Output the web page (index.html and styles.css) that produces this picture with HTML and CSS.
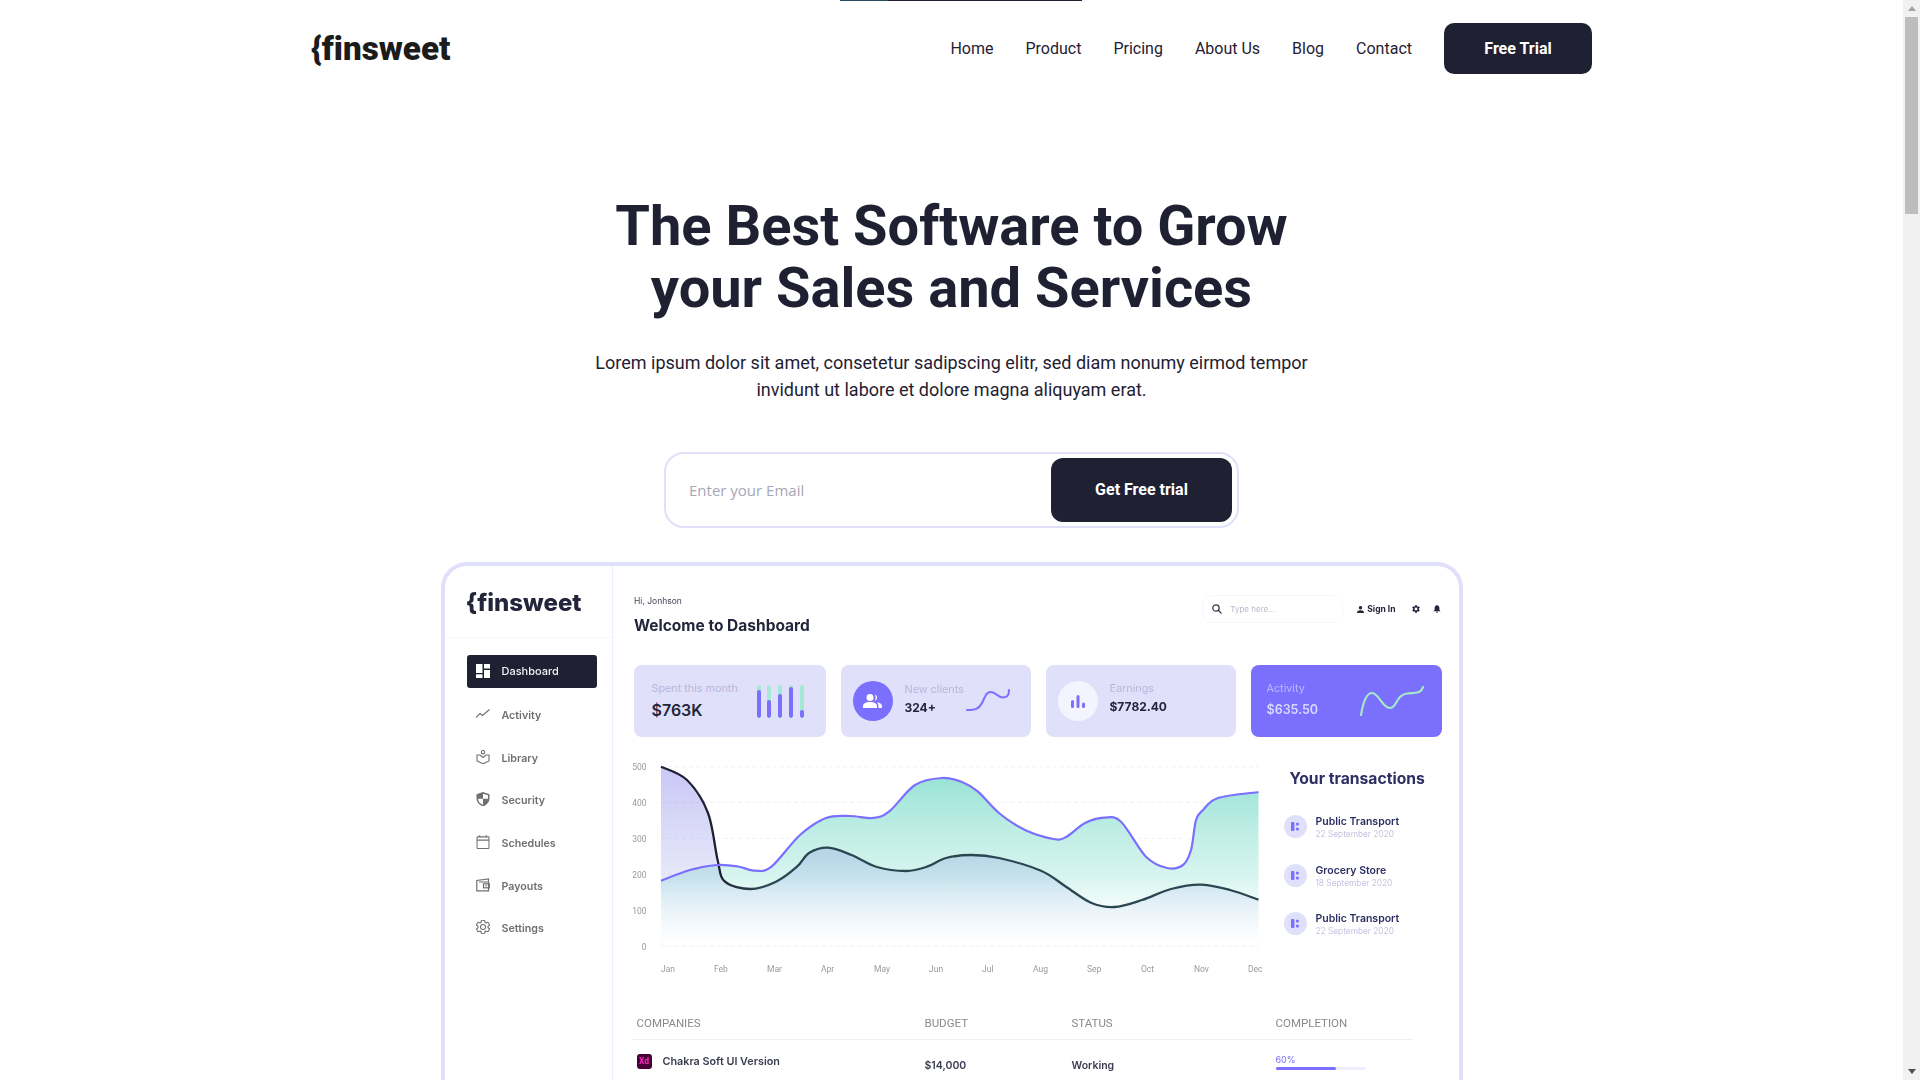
FILE: index.html
```html
<!DOCTYPE html>
<html lang="en">
<head>
<meta charset="utf-8">
<title>Finsweet</title>
<link rel="stylesheet" href="styles.css">
</head>
<body>
<div class="page">
  <main class="main">
    <div class="topline"><span class="topline-tint"></span></div>
    <header class="nav">
      <div class="logo">{finsweet</div>
      <nav class="nav-links">
        <a>Home</a><a>Product</a><a>Pricing</a><a>About Us</a><a>Blog</a><a>Contact</a>
        <button class="btn-trial">Free Trial</button>
      </nav>
    </header>
    <section class="hero">
      <h1>The Best Software to Grow<br>your Sales and Services</h1>
      <p>Lorem ipsum dolor sit amet, consetetur sadipscing elitr, sed diam nonumy eirmod tempor<br>invidunt ut labore et dolore magna aliquyam erat.</p>
      <form class="signup">
        <input class="signup-input" type="text" placeholder="Enter your Email">
        <button class="signup-btn" type="button">Get Free trial</button>
      </form>
    </section>
    <section class="frame">
      <div class="shot">
        <aside class="side">
          <div class="side-logo">{finsweet</div>
          <ul class="menu">
            <li class="menu-item active">
              <svg class="mi" viewBox="0 0 14 14"><path fill="#fff" d="M0 0h6.500v9H0zM8 0h6v4.500H8zM0 10.200h6.500V14H0zM8 6h6v8H8z"/></svg>Dashboard</li>
            <li class="menu-item">
              <svg class="mi" viewBox="0 0 14 14"><path fill="none" stroke="#6f6f74" stroke-width="1.100" d="M0 10.500 4 6.500l2.500 2L13.500 2.500"/></svg>Activity</li>
            <li class="menu-item">
              <svg class="mi" viewBox="0 0 14 14"><g fill="none" stroke="#6f6f74" stroke-width="1.100"><circle cx="7" cy="2.200" r="1.700"/><path d="M4 5H1v6l6 2.800L13 11V5h-3L7 7.500z"/></g></svg>Library</li>
            <li class="menu-item">
              <svg class="mi" viewBox="0 0 14 14"><path fill="#6f6f74" d="M7 0l6.500 2.200v4.300C13.500 10 11 13 7 14.500 3 13 .5 10 .5 6.500V2.200zM7 1.800v5H2c.1 2.700 2 5 5 6.100V6.800h5V3.300z"/></svg>Security</li>
            <li class="menu-item">
              <svg class="mi" viewBox="0 0 14 15"><g fill="none" stroke="#6f6f74" stroke-width="1.100"><rect x=".6" y="2" width="12.800" height="12.400" rx=".8"/><path d="M.6 5.500h12.800M3.500 0v2M10.500 0v2"/></g></svg>Schedules</li>
            <li class="menu-item">
              <svg class="mi" viewBox="0 0 14 14"><g fill="none" stroke="#6f6f74" stroke-width="1.200"><path d="M12.500 4V12.800H.8V2.500L12.500 1v3H3"/><rect x="7.500" y="5.800" width="5.800" height="4"/></g><circle cx="10" cy="7.800" r=".8" fill="#6f6f74"/></svg>Payouts</li>
            <li class="menu-item">
              <svg class="mi" viewBox="2 2 20 20"><path fill="none" stroke="#6f6f74" stroke-width="1.500" d="M19.140 12.940c.04-.3.06-.61.06-.94 0-.32-.02-.64-.07-.94l2.030-1.580a.49.49 0 0 0 .12-.61l-1.920-3.320a.488.488 0 0 0-.59-.22l-2.390.96c-.5-.38-1.030-.7-1.620-.94l-.36-2.540a.484.484 0 0 0-.48-.41h-3.840c-.24 0-.43.17-.47.41l-.36 2.540c-.59.24-1.130.57-1.620.94l-2.390-.96c-.22-.08-.47 0-.59.22L2.740 8.870c-.12.21-.08.47.12.61l2.030 1.580c-.05.3-.09.63-.09.94s.02.64.07.94l-2.030 1.580a.49.49 0 0 0-.12.61l1.920 3.320c.12.22.37.29.59.22l2.390-.96c.5.38 1.030.7 1.620.94l.36 2.540c.05.24.24.41.48.41h3.840c.24 0 .44-.17.47-.41l.36-2.540c.59-.24 1.130-.56 1.620-.94l2.390.96c.22.08.47 0 .59-.22l1.920-3.320c.12-.22.07-.47-.12-.61l-2.010-1.580zM12 15.600c-1.980 0-3.600-1.620-3.600-3.600s1.620-3.600 3.600-3.600 3.600 1.620 3.600 3.600-1.620 3.600-3.600 3.600z"/></svg>Settings</li>
          </ul>
        </aside>
        <div class="content">
          <div class="top">
            <div>
              <div class="hi">Hi, Jonhson</div>
              <div class="welcome">Welcome to Dashboard</div>
            </div>
            <div class="tools">
              <div class="search">
                <svg class="search-ic" viewBox="0 0 10 10"><g fill="none" stroke="#3b3d4c" stroke-width="1.300"><circle cx="4" cy="4" r="3.200"/><path d="M6.400 6.400 9.500 9.500"/></g></svg>
                <span>Type here...</span>
              </div>
              <div class="signin">
                <svg class="signin-ic" viewBox="0 0 8 8"><circle cx="4" cy="2" r="2" fill="#23253a"/><path fill="#23253a" d="M0 8c0-2.400 1.500-3.200 4-3.200S8 5.600 8 8z"/></svg>Sign In
              </div>
              <svg class="tool-ic" viewBox="2 2 20 20"><path fill="#23253a" fill-rule="evenodd" d="M19.140 12.940c.04-.3.06-.61.06-.94 0-.32-.02-.64-.07-.94l2.030-1.580a.49.49 0 0 0 .12-.61l-1.920-3.320a.488.488 0 0 0-.59-.22l-2.390.96c-.5-.38-1.030-.7-1.620-.94l-.36-2.540a.484.484 0 0 0-.48-.41h-3.840c-.24 0-.43.17-.47.41l-.36 2.540c-.59.24-1.130.57-1.620.94l-2.390-.96c-.22-.08-.47 0-.59.22L2.740 8.870c-.12.21-.08.47.12.61l2.030 1.580c-.05.3-.09.63-.09.94s.02.64.07.94l-2.030 1.580a.49.49 0 0 0-.12.61l1.920 3.320c.12.22.37.29.59.22l2.390-.96c.5.38 1.030.7 1.620.94l.36 2.540c.05.24.24.41.48.41h3.840c.24 0 .44-.17.47-.41l.36-2.540c.59-.24 1.130-.56 1.620-.94l2.390.96c.22.08.47 0 .59-.22l1.920-3.320c.12-.22.07-.47-.12-.61l-2.010-1.580zM12 15.600c-1.980 0-3.600-1.620-3.600-3.600s1.620-3.600 3.600-3.600 3.600 1.620 3.600 3.600-1.620 3.600-3.600 3.600z"/></svg>
              <svg class="tool-ic bell" viewBox="0 0 8 9"><path fill="#23253a" d="M4 0c.4 0 .7.3.7.7C6 1 6.700 2.100 6.700 3.500v2L8 7H0l1.300-1.500v-2C1.300 2.100 2 1 3.300.7 3.300.3 3.600 0 4 0zM3 7.700h2C5 8.500 4.500 9 4 9s-1-.5-1-1.300z"/></svg>
            </div>
          </div>
          <div class="cards">
            <div class="card">
              <div class="card-text">
                <div class="card-label">Spent this month</div>
                <div class="card-value big">$763K</div>
              </div>
              <div class="bars">
                <i class="bar"><b style="height:82%"></b></i>
                <i class="bar"><b style="height:52%"></b></i>
                <i class="bar"><b style="height:70%"></b></i>
                <i class="bar"><b style="height:91%"></b></i>
                <i class="bar"><b style="height:22%"></b></i>
              </div>
            </div>
            <div class="card card-icon">
              <div class="circle circle-purple">
                <svg class="circle-ic" viewBox="0 0 19 14"><path fill="#fff" d="M7 0a3.500 3.500 0 1 1 0 7 3.500 3.500 0 0 1 0-7zM0 14v-2c0-2.500 3-4 7-4s7 1.500 7 4v2zM11.500 .2a3.400 3.400 0 0 1 0 6.600c.8-.9 1.200-2 1.200-3.300s-.4-2.400-1.200-3.300zM14 8.200c2.800.4 5 1.700 5 3.800v2h-3.500v-2c0-1.600-.6-2.800-1.500-3.800z"/></svg>
              </div>
              <div class="card-text">
                <div class="card-label">New clients</div>
                <div class="card-value">324+</div>
              </div>
              <svg class="spark-a" viewBox="0 0 44 22"><path fill="none" stroke="#7b6ffe" stroke-width="2" stroke-linecap="round" d="M1 21C8 21 13 21 17 12 20 5 21 3 25 3 30 3 32 9 37 8.500 41 8 43 7 43 1"/></svg>
            </div>
            <div class="card card-icon">
              <div class="circle circle-pale">
                <svg class="circle-ic small" viewBox="0 0 14 13"><g fill="#7b6ffe"><rect x="0" y="5" width="3" height="8" rx="1.500"/><rect x="5.500" y="0" width="3" height="13" rx="1.500"/><rect x="11" y="7.500" width="3" height="5.500" rx="1.500"/></g></svg>
              </div>
              <div class="card-text lifted">
                <div class="card-label">Earnings</div>
                <div class="card-value">$7782.40</div>
              </div>
            </div>
            <div class="card card-dark">
              <div class="card-text">
                <div class="card-label">Activity</div>
                <div class="card-value big-light">$635.50</div>
              </div>
              <svg class="spark-b" viewBox="0 0 64 30"><path fill="none" stroke="#a5e9c9" stroke-width="2.200" stroke-linecap="round" d="M1 29C3 17 6 7 12 7 19 7 22 22 30 22 37 22 36 9 47 7.500 56 6.500 61 8 63 1"/></svg>
            </div>
          </div>
          <div class="middle">
            <svg class="chart" viewBox="620 750 660 240">
              <defs>
                <linearGradient id="tealFill" gradientUnits="userSpaceOnUse" x1="0" y1="778" x2="0" y2="945">
                  <stop offset="0" stop-color="#9ae3d6"/>
                  <stop offset=".3" stop-color="#bdede4"/>
                  <stop offset=".6" stop-color="#d8f5f0"/>
                  <stop offset="1" stop-color="#ffffff" stop-opacity="0"/>
                </linearGradient>
                <linearGradient id="lavFill" gradientUnits="userSpaceOnUse" x1="0" y1="767" x2="0" y2="945">
                  <stop offset="0" stop-color="#6c63e8" stop-opacity=".36"/>
                  <stop offset=".55" stop-color="#5f66d8" stop-opacity=".17"/>
                  <stop offset="1" stop-color="#6c9fe8" stop-opacity="0"/>
                </linearGradient>
                <linearGradient id="darkLine" gradientUnits="userSpaceOnUse" x1="661" y1="0" x2="1258" y2="0">
                  <stop offset="0" stop-color="#1f2133"/>
                  <stop offset=".1" stop-color="#1f2133"/>
                  <stop offset=".16" stop-color="#2a4650"/>
                  <stop offset="1" stop-color="#2a4650"/>
                </linearGradient>
              </defs>
              <g class="grid">
                <path d="M661 766.700H1258M661 802.500H1258M661 838.300H1258M661 874.100H1258M661 946H1258"/>
              </g>
              <path id="areaPurple" fill="url(#tealFill)"/>
              <path id="areaDark" fill="url(#lavFill)"/>
              <path id="lineDark" fill="none" stroke="url(#darkLine)" stroke-width="2.300"/>
              <path id="linePurple" fill="none" stroke="#7b6ffe" stroke-width="2.200"/>
              <g class="ylab">
                <text x="646.500" y="770">500</text><text x="646.500" y="806">400</text><text x="646.500" y="842">300</text><text x="646.500" y="878">200</text><text x="646.500" y="914">100</text><text x="646.500" y="950">0</text>
              </g>
              <g class="xlab">
                <text x="661" y="972">Jan</text><text x="714" y="972">Feb</text><text x="767" y="972">Mar</text><text x="821" y="972">Apr</text><text x="874" y="972">May</text><text x="929" y="972">Jun</text><text x="982" y="972">Jul</text><text x="1033" y="972">Aug</text><text x="1087" y="972">Sep</text><text x="1141" y="972">Oct</text><text x="1194" y="972">Nov</text><text x="1248" y="972">Dec</text>
              </g>
            </svg>
            <div class="tx">
              <div class="tx-title">Your transactions</div>
              <div class="tx-item">
                <span class="tx-dot"><svg class="tx-ic" viewBox="0 0 8 9"><g fill="#7b6ffe"><rect width="3.400" height="9" rx="1"/><circle cx="6.400" cy="2" r="1.600"/><circle cx="6.400" cy="7" r="1.600"/></g></svg></span>
                <div><div class="tx-name">Public Transport</div><div class="tx-date">22 September 2020</div></div>
              </div>
              <div class="tx-item">
                <span class="tx-dot"><svg class="tx-ic" viewBox="0 0 8 9"><g fill="#7b6ffe"><rect width="3.400" height="9" rx="1"/><circle cx="6.400" cy="2" r="1.600"/><circle cx="6.400" cy="7" r="1.600"/></g></svg></span>
                <div><div class="tx-name">Grocery Store</div><div class="tx-date">18 September 2020</div></div>
              </div>
              <div class="tx-item">
                <span class="tx-dot"><svg class="tx-ic" viewBox="0 0 8 9"><g fill="#7b6ffe"><rect width="3.400" height="9" rx="1"/><circle cx="6.400" cy="2" r="1.600"/><circle cx="6.400" cy="7" r="1.600"/></g></svg></span>
                <div><div class="tx-name">Public Transport</div><div class="tx-date">22 September 2020</div></div>
              </div>
            </div>
          </div>
          <div class="table">
            <div class="row head"><span>COMPANIES</span><span>BUDGET</span><span>STATUS</span><span>COMPLETION</span></div>
            <div class="row body">
              <div class="company"><span class="xd">Xd</span><span class="company-name">Chakra Soft UI Version</span></div>
              <span class="cell">$14,000</span>
              <span class="cell">Working</span>
              <div class="completion"><span class="pct">60%</span><div class="progress"><div class="progress-fill"></div></div></div>
            </div>
          </div>
        </div>
      </div>
    </section>
  </main>
  <div class="scrollbar">
    <div class="sb-btn"><span class="tri-up"></span></div>
    <div class="sb-thumb"></div>
    <div class="sb-rest"></div>
    <div class="sb-btn"><span class="tri-down"></span></div>
  </div>
</div>
<script src="chart.js"></script>
</body>
</html>
```

FILE: styles.css
```css
* { box-sizing: border-box; }
html, body { margin: 0; height: 100%; background: #fff; }
body { font-family: Roboto, "Liberation Sans", sans-serif; color: #1f2133; }
.page { display: flex; height: 1080px; overflow: hidden; }
.main { flex: 1; min-width: 0; height: 1080px; overflow: hidden; }

.topline { width: 242px; height: 1px; margin-left: 840px; background: #1f2133; }
.topline-tint { display: block; width: 48px; height: 1px; background: #2a4a5e; }

.nav { width: 1282px; margin: 0 0 0 310px; padding-top: 22px; display: flex; justify-content: space-between; align-items: center; }
.logo { font-family: Roboto, sans-serif; font-weight: 900; font-size: 33.200px; line-height: 51px; color: #1c1c1c; padding-left: 1px; font-variant-ligatures: none; }
.nav-links { display: flex; align-items: center; gap: 32px; font-size: 16px; line-height: 20px; }
.btn-trial { width: 148px; height: 51px; border: 0; border-radius: 10px; background: #1f2133; color: #fff; font: 700 16px Roboto, sans-serif; }

.hero { text-align: center; padding-top: 121px; }
.hero h1 { margin: 0; font-size: 56px; line-height: 62px; font-weight: 700; color: #1f2133; }
.hero p { margin: 30px 0 0; font-size: 18px; line-height: 27px; color: #1f2133; }
.signup { width: 575px; height: 76px; margin: 49px auto 0; padding: 4px 5px 4px 23px; border: 2px solid #e0e0fb; border-radius: 20px; display: flex; align-items: center; justify-content: space-between; }
.signup-input { flex: 1; min-width: 0; border: 0; outline: 0; padding: 0; font: 15px "Open Sans", sans-serif; color: #1f2133; background: transparent; }
.signup-input::placeholder { color: #a6a6b8; opacity: 1; }
.signup-btn { width: 181px; height: 64px; flex: none; border: 0; padding: 0 0 2px; border-radius: 12px; background: #1f2133; color: #fff; font: 700 16px Roboto, sans-serif; }

.frame { width: 1022px; height: 600px; margin: 34px auto 0; border: 4px solid #e0e0fb; border-radius: 26px; background: #fff; overflow: hidden; }
.shot { display: flex; height: 100%; font-family: Inter, Roboto, sans-serif; filter: blur(.5px); }

.side { width: 168px; flex: none; border-right: 1px solid #efefff; }
.side-logo { height: 72px; padding: 22px 0 0 21px; border-bottom: 1px solid #f5f5fa; font-weight: 800; font-size: 24px; line-height: 30px; color: #23253a; }
.menu { list-style: none; margin: 0; padding: 17px 0 0 22px; }
.menu-item { display: flex; align-items: center; gap: 12px; height: 42.700px; padding-left: 9px; width: 130px; font-size: 10.700px; font-weight: 600; color: #6f6f74; }
.menu-item .mi { margin-top: -3px; }
.menu-item.active { height: 32.500px; margin-bottom: 6.500px; background: #1f2133; border-radius: 3px; color: #f1f1f6; font-weight: 500; font-size: 11px; }
.menu-item.active .mi { margin-top: 0; }
.mi { width: 14px; height: 14px; flex: none; }

.content { flex: 1; min-width: 0; padding: 29px 17px 0 21px; }
.top { display: flex; justify-content: space-between; align-items: flex-start; }
.hi { font-size: 8.500px; line-height: 12px; color: #45465a; padding-left: .5px; }
.welcome { margin-top: 9px; font-size: 15.500px; line-height: 20px; font-weight: 700; color: #23253a; padding-left: .5px; }
.tools { display: flex; align-items: center; height: 28px; padding-right: 1px; }
.search { width: 141px; height: 28px; padding-left: 9px; display: flex; align-items: center; gap: 8px; border: 1px solid #f5f5ff; border-radius: 10px; font-size: 8px; color: #b9b9cc; }
.search-ic { width: 10px; height: 10px; }
.signin { display: flex; align-items: center; gap: 3px; margin-left: 14px; font-size: 8.500px; font-weight: 700; color: #23253a; }
.signin-ic { width: 7px; height: 7px; }
.tool-ic { width: 8px; height: 8px; margin-left: 16px; }
.bell { margin-left: 13px; }

.cards { display: grid; grid-template-columns: 192px 190px 190px 191px; column-gap: 15px; margin-top: 29px; }
.card { height: 72px; padding: 0 22px 0 18px; display: flex; align-items: center; justify-content: space-between; background: #e0e0fb; border-radius: 8px; }
.card-icon { justify-content: flex-start; padding: 0 0 0 12px; gap: 12px; }
.card-dark { background: #7b6ffe; padding-left: 16px; padding-right: 18px; }
.card-label { font-size: 10.800px; line-height: 14px; color: #b7b7d8; }
.card-value { font-size: 12px; line-height: 22px; font-weight: 700; color: #23253a; }
.card-value.big { margin-top: 3px; font-size: 16px; font-weight: 600; }
.card-value.big-light { margin-top: 3px; font-size: 12.500px; font-weight: 600; color: #d9d9ff; }
.card-dark .card-label { color: #b3bcff; }
.lifted { margin-bottom: 2px; }
.bars { display: flex; gap: 6.750px; height: 33px; }
.bar { display: flex; align-items: flex-end; width: 4px; height: 33px; border-radius: 2px; background: #a4e8d5; overflow: hidden; }
.bar b { display: block; width: 4px; background: #7b6ffe; border-radius: 2px; }
.circle { width: 40px; height: 40px; border-radius: 50%; flex: none; display: flex; align-items: center; justify-content: center; }
.circle-purple { background: #7b6ffe; }
.circle-pale { background: #f4f4ff; }
.circle-ic { width: 19px; height: 14px; }
.circle-ic.small { width: 14px; height: 13px; }
.spark-a { width: 44px; height: 22px; margin-left: -10px; margin-top: -3px; }
.spark-b { width: 64px; height: 30px; }

.middle { display: flex; margin: 13px 0 0 -14px; }
.chart { width: 660px; height: 240px; flex: none; }
.grid path { fill: none; stroke: #efefff; stroke-width: 1; stroke-dasharray: 4 3; }
.ylab text { font: 8.500px Roboto, sans-serif; fill: #9a9a9a; text-anchor: end; }
.xlab text { font: 8.500px Roboto, sans-serif; fill: #9a9a9a; }

.tx { margin-left: 10px; padding-top: 19px; }
.tx-title { font-size: 15.700px; line-height: 20px; font-weight: 700; color: #2d2f63; margin-bottom: 15px; }
.tx-item { display: flex; align-items: center; gap: 9px; height: 48.500px; margin-left: -6px; }
.tx-dot { width: 23px; height: 23px; flex: none; margin-top: -3px; border-radius: 50%; background: #e0e0fb; display: flex; align-items: center; justify-content: center; }
.tx-ic { width: 8px; height: 9px; }
.tx-name { font-size: 10.500px; line-height: 13px; font-weight: 600; color: #2d2f63; }
.tx-date { font-size: 8.300px; line-height: 13px; color: #c4c4e0; }

.table { width: 781px; margin: 26px 0 0 -2px; }
.row { display: grid; grid-template-columns: 288px 147px 204px 1fr; padding-left: 5px; }
.head { height: 24px; font-size: 11.500px; line-height: 14px; color: #8a8a8a; border-bottom: 1px solid #efefef; font-family: Roboto, sans-serif; }
.body { padding-top: 14px; align-items: start; }
.company { display: flex; align-items: center; gap: 11px; }
.xd { width: 15px; height: 15px; border-radius: 3px; background: #470137; color: #ff2bc2; font: 700 8.500px/15px Roboto, sans-serif; text-align: center; }
.company-name { font-size: 10.800px; font-weight: 600; color: #3a3c50; }
.cell { margin-top: 5px; font-size: 10.500px; line-height: 14px; font-weight: 600; color: #3a3c50; }
.pct { display: block; font-size: 9px; line-height: 12px; color: #7b6ffe; }
.progress { width: 90px; height: 3px; margin-top: 1px; background: #eeeeff; border-radius: 2px; }
.progress-fill { width: 60px; height: 3px; background: #7b6ffe; border-radius: 2px; }

.scrollbar { width: 17px; flex: none; height: 1080px; background: #f1f1f1; display: flex; flex-direction: column; }
.sb-btn { height: 17px; flex: none; display: flex; align-items: center; justify-content: center; }
.tri-up { width: 0; height: 0; border: 4px solid transparent; border-top: 0; border-bottom: 5px solid #a3a3a3; }
.tri-down { width: 0; height: 0; border: 4px solid transparent; border-bottom: 0; border-top: 5px solid #505050; }
.sb-thumb { height: 197px; flex: none; margin: 0 2px; background: #bdbdbd; }
.sb-rest { flex: 1; }
```

FILE: chart.js
```js
var purple = [[661,880.7],[690,870],[717,865],[738,866.5],[755,870.7],[771.5,866.7],[800,835],[826,818],[850,816],[872.5,818],[889,811.7],[915,785],[942,778],[962,782],[978,791.7],[999,813],[1025,830],[1053.5,839],[1066,837],[1085,823],[1104,817.7],[1121,821.7],[1146,856.7],[1167,868],[1183,865],[1191,850],[1196,820],[1203,810],[1218,798],[1258.5,792]];
var dark = [[661,766.7],[687,780],[708,813],[717.6,860],[725,881.7],[750.5,889],[776,881.7],[797,866.7],[809,853],[828,847.7],[851.5,855],[877,867],[906,871],[927,866.7],[946,858],[971.5,855],[999,858],[1041,870.7],[1066,886.7],[1091,902.7],[1114.5,907],[1142,900],[1171,889],[1201,884.7],[1230,890],[1258.5,899.7]];

function smooth(points) {
  var d = 'M' + points[0][0] + ' ' + points[0][1];
  for (var i = 0; i < points.length - 1; i++) {
    var p0 = points[Math.max(i - 1, 0)], p1 = points[i], p2 = points[i + 1], p3 = points[Math.min(i + 2, points.length - 1)];
    var c1x = p1[0] + (p2[0] - p0[0]) / 6, c1y = p1[1] + (p2[1] - p0[1]) / 6;
    var c2x = p2[0] - (p3[0] - p1[0]) / 6, c2y = p2[1] - (p3[1] - p1[1]) / 6;
    d += 'C' + c1x.toFixed(1) + ' ' + c1y.toFixed(1) + ' ' + c2x.toFixed(1) + ' ' + c2y.toFixed(1) + ' ' + p2[0] + ' ' + p2[1];
  }
  return d;
}

var closeArea = 'L1258.5 946L661 946Z';
document.getElementById('linePurple').setAttribute('d', smooth(purple));
document.getElementById('lineDark').setAttribute('d', smooth(dark));
document.getElementById('areaPurple').setAttribute('d', smooth(purple) + closeArea);
document.getElementById('areaDark').setAttribute('d', smooth(dark) + closeArea);
```
